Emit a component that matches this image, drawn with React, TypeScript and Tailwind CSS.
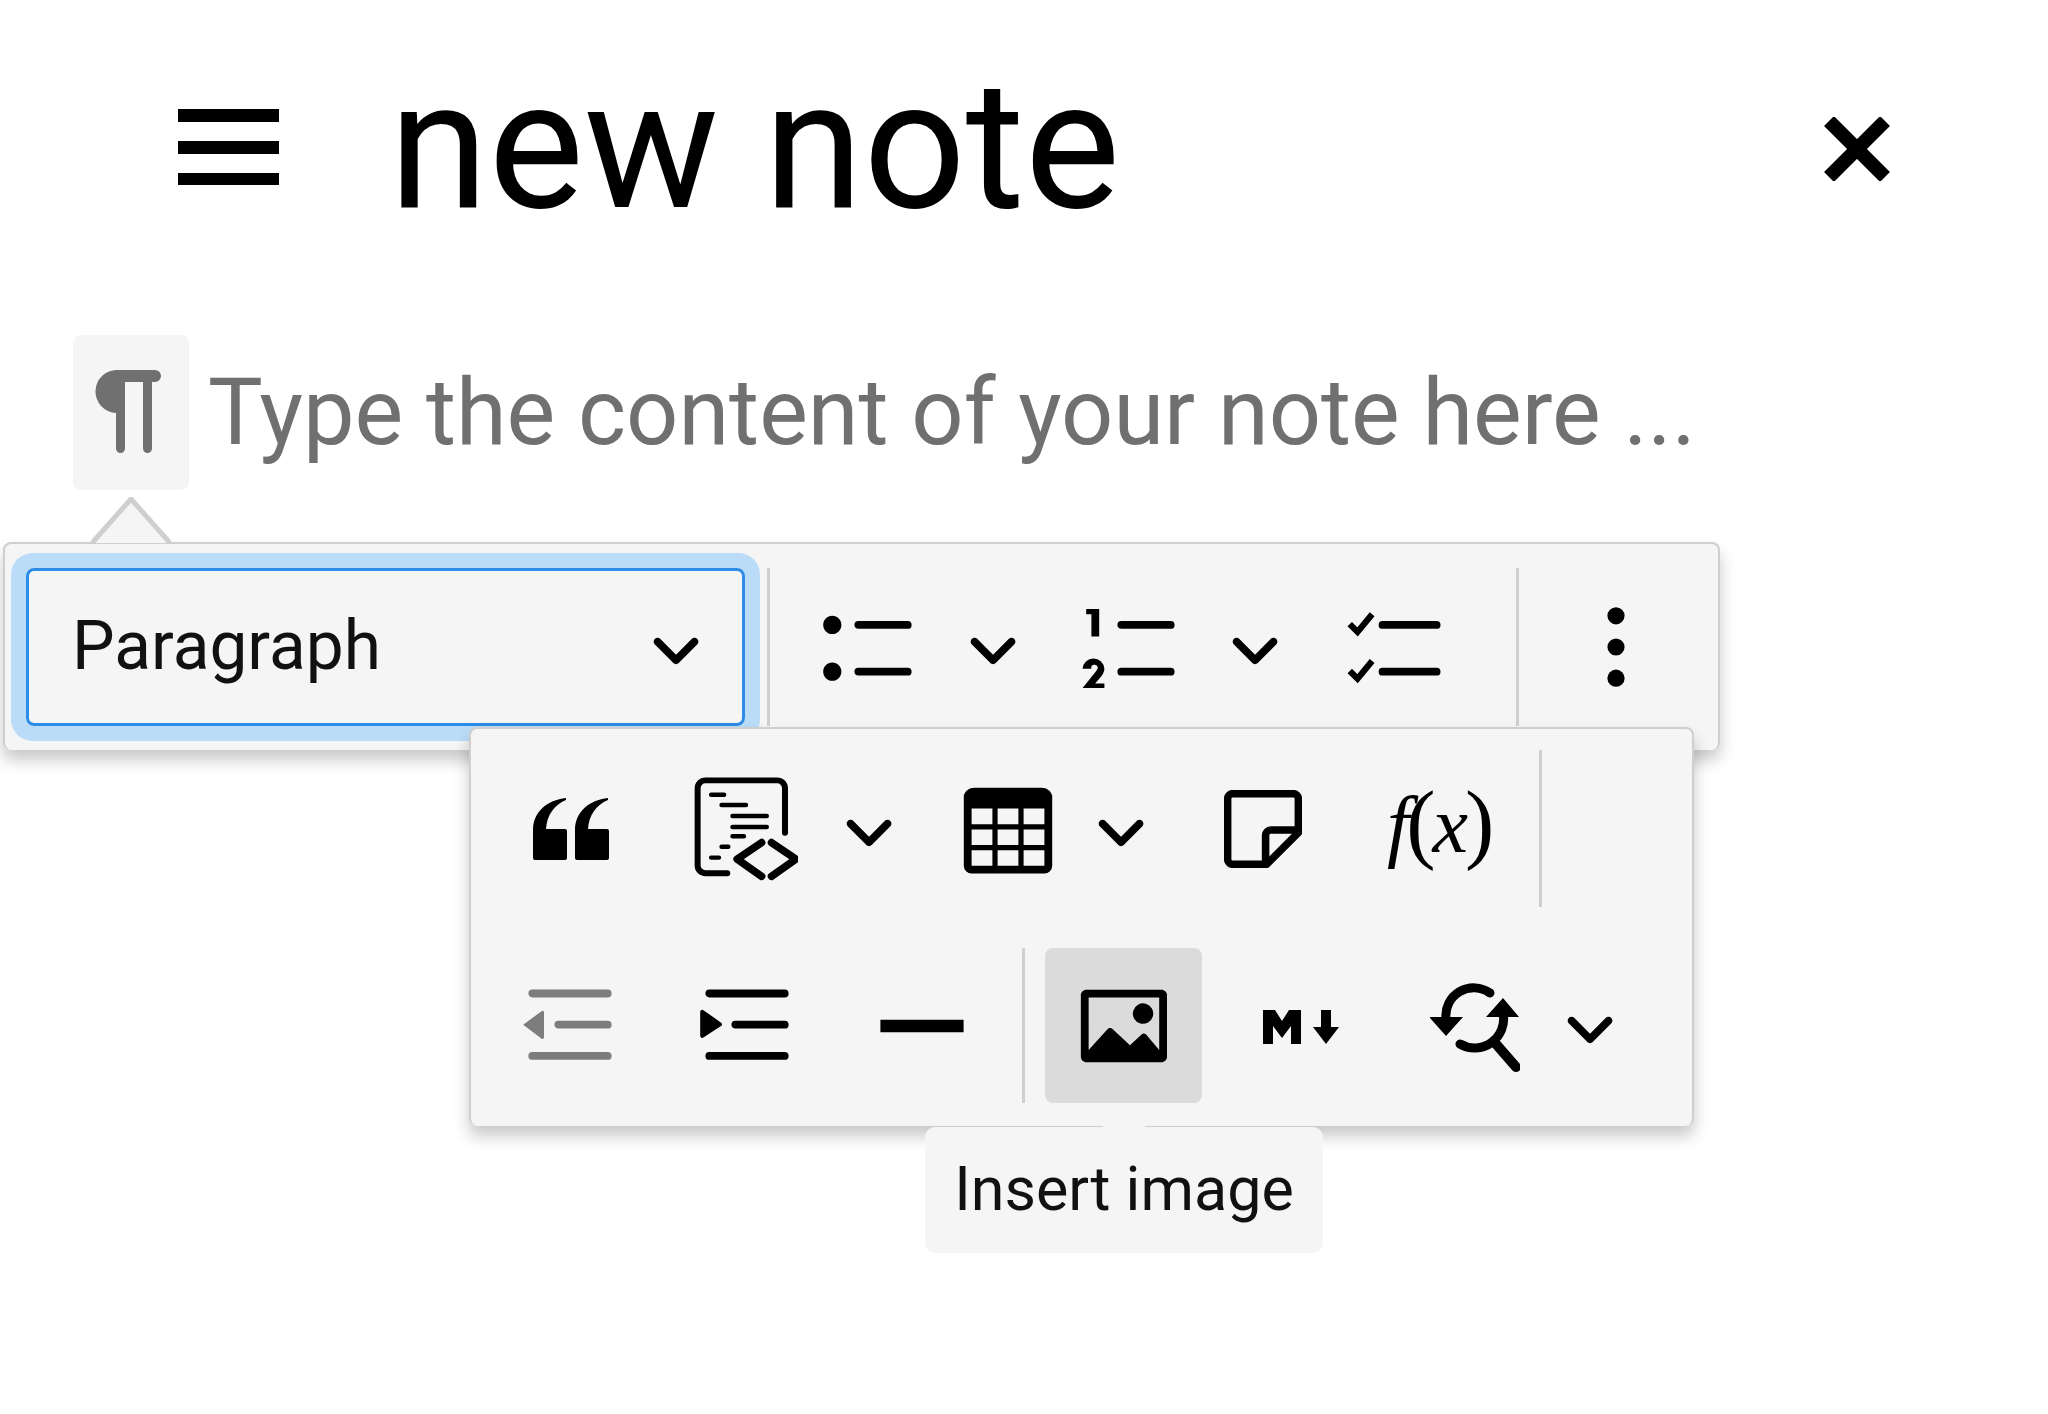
import React from 'react';

const Chevron = ({ className = '' }: { className?: string }) => (
  <svg viewBox="0 0 10 10" className={`w-[52px] h-[52px] shrink-0 ${className}`} fill="#000">
    <path d="M.941 4.523a.75.75 0 1 1 1.06-1.06l3.006 3.005 3.005-3.005a.75.75 0 1 1 1.06 1.06l-3.549 3.55a.75.75 0 0 1-1.168-.136L.941 4.523z" />
  </svg>
);

const Icon = ({ d, className = '', fill = '#000' }: { d: string; className?: string; fill?: string }) => (
  <svg viewBox="0 0 20 20" className={`w-[104px] h-[104px] shrink-0 ${className}`} fill={fill} fillRule="evenodd">
    <path d={d} />
  </svg>
);

const Sep = ({ className = '' }: { className?: string }) => <div className={`w-[3px] bg-[#cfcfcf] shrink-0 ${className}`} />;

const icons = {
  bullets: 'M7 5.75c0 .414.336.75.75.75h9.5a.75.75 0 1 0 0-1.5h-9.5a.75.75 0 0 0-.75.75zm-6 0C1 4.784 1.777 4 2.75 4c.966 0 1.75.777 1.75 1.75 0 .966-.777 1.75-1.75 1.75C1.784 7.5 1 6.723 1 5.75zm6 9c0 .414.336.75.75.75h9.5a.75.75 0 1 0 0-1.5h-9.5a.75.75 0 0 0-.75.75zm-6 0c0-.966.777-1.75 1.75-1.75.966 0 1.75.777 1.75 1.75 0 .966-.777 1.75-1.75 1.75-.966 0-1.75-.777-1.75-1.75z',
  numbers: 'M7 5.75c0 .414.336.75.75.75h9.5a.75.75 0 1 0 0-1.5h-9.5a.75.75 0 0 0-.75.75zM3.5 3v5H2V3.7H1v-1h2.5V3zM.343 17.857l2.59-3.257c.2-.3.3-.5.3-.7a.6.6 0 1 0-1.24.3H.302a2.1 2.1 0 0 1 4.196 0c0 .505-.245 1.007-.579 1.41l-1.19 1.4h1.767v.857H.343zM7 14.75a.75.75 0 0 1 .75-.75h9.5a.75.75 0 1 1 0 1.5h-9.5a.75.75 0 0 1-.75-.75z',
  table: 'M3 5.5v3h4v-3H3zm0 4v3h4v-3H3zm0 4v3h4v-3H3zm5 3h4v-3H8v3zm5 0h4v-3h-4v3zm4-4v-3h-4v3h4zm0-4v-3h-4v3h4zm1.5 8A1.5 1.5 0 0 1 17 18H3a1.5 1.5 0 0 1-1.5-1.5V3c.222-.863 1.068-1.5 2-1.5h13c.932 0 1.778.637 2 1.5v13.5zM12 12.5v-3H8v3h4zm0-4v-3H8v3h4z',
  outdent: 'M2 3.75c0 .414.336.75.75.75h14.5a.75.75 0 1 0 0-1.5H2.75a.75.75 0 0 0-.75.75zm5 6c0 .414.336.75.75.75h9.5a.75.75 0 1 0 0-1.5h-9.5a.75.75 0 0 0-.75.75zM2.75 16.5h14.5a.75.75 0 1 0 0-1.5H2.75a.75.75 0 1 0 0 1.5zM1 9.74 4.6 7.1a.3.3 0 0 1 .4.25v4.85a.3.3 0 0 1-.45.25L1 9.74z',
  indent: 'M2 3.75c0 .414.336.75.75.75h14.5a.75.75 0 1 0 0-1.5H2.75a.75.75 0 0 0-.75.75zm5 6c0 .414.336.75.75.75h9.5a.75.75 0 1 0 0-1.5h-9.5a.75.75 0 0 0-.75.75zM2.75 16.5h14.5a.75.75 0 1 0 0-1.5H2.75a.75.75 0 1 0 0 1.5zM1.632 6.95 5.02 9.358a.4.4 0 0 1-.013.661l-3.39 2.207A.4.4 0 0 1 1 11.892V7.275a.4.4 0 0 1 .632-.326z',
  image: 'M6.91 10.54c.26-.23.64-.21.88.03l3.36 3.14 2.23-2.06a.64.64 0 0 1 .87 0l2.52 2.97V4.5H3.2v10.12l3.71-4.08zm10.27-7.51c.6 0 1.09.47 1.09 1.05v11.84c0 .59-.49 1.06-1.09 1.06H2.79c-.6 0-1.09-.47-1.09-1.06V4.08c0-.58.49-1.05 1.1-1.05h14.38zm-5.22 5.56a1.96 1.96 0 1 1 3.4-1.96 1.96 1.96 0 0 1-3.4 1.96z',
};

const PilcrowIcon = () => (
  <svg viewBox="0 0 66 83" className="w-[66px] h-[83px] shrink-0" fill="#707070">
    <path d="M23 0H60a6 6 0 0 1 0 12H57V78.500a4.500 4.500 0 0 1-9 0V12H30V78.500a4.500 4.500 0 0 1-9 0V43A21.500 21.500 0 0 1 23 0z" />
  </svg>
);

const QuoteIcon = () => (
  <svg viewBox="0 0 77 63" className="w-[77px] h-[63px] shrink-0" fill="#000">
    <path d="M0 61V33C0 15 14 3 33 1V3C21 8 14 18 13 32H32a2 2 0 0 1 2 2V61a2 2 0 0 1-2 2H2a2 2 0 0 1-2-2z" />
    <path d="M42 61V33C42 15 56 3 75 1V3C63 8 56 18 55 32H74a2 2 0 0 1 2 2V61a2 2 0 0 1-2 2H44a2 2 0 0 1-2-2z" />
  </svg>
);

const TodoIcon = () => (
  <svg viewBox="0 0 20 20" className="w-[104px] h-[104px] shrink-0" fill="none" stroke="#000">
    <path d="M7.6 5.75H18M7.6 14.75H18" strokeWidth="1.5" strokeLinecap="round" />
    <path d="M1.300 5.600 2.800 7.100 5.600 3.700M1.300 14.600 2.800 16.100 5.600 12.700" strokeWidth="1.200" />
  </svg>
);

const CodeIcon = () => (
  <svg viewBox="0 0 20 20" className="w-[104px] h-[104px] shrink-0" fill="none" stroke="#000" strokeLinecap="round">
    <path d="M6.400 18.500H2.200a1.500 1.500 0 0 1-1.500-1.500V2.150a1.500 1.500 0 0 1 1.500-1.500H16a1.500 1.500 0 0 1 1.500 1.500V10.700" strokeWidth="1.150" />
    <path d="M3.300 3.400H5.800M5.300 5.400H10M7.400 7.500H14M7.400 9.600H14M7.400 11.400H9.600M5.300 13.400H6.600M3.300 15.500H4.800" strokeWidth=".85" />
    <path d="M13 12.600 8.300 15.800 13 19.100M14.900 12.600 19.600 15.800 14.900 19.100" strokeWidth="1.450" strokeLinejoin="round" />
  </svg>
);

const NoteIcon = () => (
  <svg viewBox="0 0 15 15" className="w-[78px] h-[78px] shrink-0" fill="none" stroke="#000" strokeWidth="1.450" strokeLinejoin="round">
    <path d="M1.700.700H13.300a1 1 0 0 1 1 1V8.200L8.200 14.300H1.700a1 1 0 0 1-1-1V1.700a1 1 0 0 1 1-1z" />
    <path d="M8 14V8.700a1 1 0 0 1 1-1H14.200" />
  </svg>
);

const MarkdownIcon = () => (
  <svg viewBox="0 0 76 34" className="w-[76px] h-[34px] shrink-0" fill="#000">
    <path d="M0 0h12l7 11 7-11h12v34H28V16l-9 12-9-12v18H0z" />
    <path d="M58 0h10v17h8L63 34 50 17h8z" />
  </svg>
);

const FindReplaceIcon = () => (
  <svg viewBox="0 0 90 90" className="w-[90px] h-[90px] shrink-0" fill="none" stroke="#000" strokeWidth="9" strokeLinecap="round">
    <path d="M60 10A28 28 0 0 0 16 36" />
    <path d="M30 61A29 29 0 0 0 73 30" />
    <path d="M66 61 86 84" strokeWidth="10" />
    <path d="M-1 34h34L16 53zM56 34h33L73 15z" fill="#000" stroke="none" />
  </svg>
);

const DotsIcon = () => (
  <svg viewBox="0 0 20 20" className="w-[104px] h-[104px] shrink-0" fill="#000">
    <circle cx="10" cy="4" r="1.650" />
    <circle cx="10" cy="10" r="1.650" />
    <circle cx="10" cy="16" r="1.650" />
  </svg>
);

export default function App() {
  return (
    <div className="relative w-[2048px] h-[1414px] bg-white overflow-hidden font-['Roboto',sans-serif] text-black">
      <header className="flex items-center h-[250px] pt-[50px] pl-[178px]">
        <svg viewBox="0 0 101 76" className="w-[101px] h-[76px] shrink-0 mb-[6px]" fill="#000">
          <rect y="0" width="101" height="13" />
          <rect y="32" width="101" height="13" />
          <rect y="64" width="101" height="12" />
        </svg>
        <h1 className="ml-[110px] mb-[8px] text-[180px] leading-none font-normal whitespace-nowrap">new note</h1>
        <svg viewBox="0 0 66 64" className="w-[66px] h-[64px] ml-auto mr-[158px] mb-[2px] shrink-0" fill="none" stroke="#000" strokeWidth="14">
          <path d="M5 4 61 60M61 4 5 60" />
        </svg>
      </header>

      <div className="flex items-center mt-[85px] ml-[73px]">
        <div className="flex items-center justify-center w-[116px] h-[155px] pr-[6px] pb-[2px] rounded-[8px] bg-[#f5f5f5] shrink-0">
          <PilcrowIcon />
        </div>
        <p className="ml-[19px] text-[91.8px] leading-none text-[#707070] whitespace-nowrap">Type the content of your note here ...</p>
      </div>

      {/* balloon arrow */}
      <svg viewBox="0 0 80 46" className="absolute left-[91px] top-[497px] w-[80px] h-[46px] z-10" fill="#f5f5f5" stroke="#cfcfcf" strokeWidth="5">
        <path d="M1 46 40 2 79 46" />
      </svg>

      {/* main toolbar */}
      <div className="absolute left-[3px] top-[542px] w-[1717px] h-[208px] flex items-center rounded-[8px] border-2 border-[#cfcfcf] border-b-0 bg-[#f5f5f5] shadow-[0_10px_16px_rgba(0,0,0,0.22)]">
        <div className="flex items-center justify-between w-[719px] h-[158px] ml-[21px] pl-[43px] pr-[40px] rounded-[8px] border-[3px] border-[#2d8ce6] shadow-[0_0_0_15px_#bbdcf8] shrink-0">
          <span className="text-[67.6px] leading-none text-[#111]">Paragraph</span>
          <Chevron />
        </div>
        <Sep className="h-[158px] ml-[22px]" />
        <Icon d={icons.bullets} className="ml-[48px]" />
        <Chevron className="ml-[45px]" />
        <Icon d={icons.numbers} className="ml-[62px]" />
        <Chevron className="ml-[44px]" />
        <div className="ml-[62px]"><TodoIcon /></div>
        <Sep className="h-[158px] ml-[69px]" />
        <div className="ml-[45px]"><DotsIcon /></div>
      </div>

      {/* overflow panel */}
      <div className="absolute left-[469px] top-[727px] w-[1225px] h-[399px] pt-[21px] rounded-[8px] border-2 border-[#cfcfcf] border-b-0 bg-[#f5f5f5] shadow-[0_10px_16px_rgba(0,0,0,0.22)] z-20">
        <div className="flex items-center h-[157px]">
          <div className="ml-[62px] mr-[11px]"><QuoteIcon /></div>
          <div className="ml-[73px]"><CodeIcon /></div>
          <Chevron className="ml-[45px]" />
          <Icon d={icons.table} className="ml-[61px] mt-[6px]" />
          <Chevron className="ml-[35px]" />
          <div className="ml-[77px]"><NoteIcon /></div>
          <span className="ml-[85px] w-[105px] whitespace-nowrap font-['Liberation_Serif',serif] text-[80px] leading-none tracking-[-3px] mt-[-12px]">
            <i>f</i><span className="text-[88px]">(</span><i>x</i><span className="text-[88px]">)</span>
          </span>
          <Sep className="h-[157px] ml-[47px]" />
        </div>
        <div className="flex items-center h-[155px] mt-[41px]">
          <Icon d={icons.outdent} fill="#7d7d7d" className="ml-[47px]" />
          <Icon d={icons.indent} className="ml-[73px]" />
          <Icon d="M2 8.800h16v2.400H2z" className="ml-[71px]" />
          <Sep className="h-[155px] ml-[48px]" />
          <div className="relative flex items-center justify-center w-[157px] h-[155px] ml-[20px] rounded-[8px] bg-[#dbdbdb] shrink-0">
            <Icon d={icons.image} />
            <div className="absolute left-[-120px] top-[179px] flex items-center justify-center w-[398px] h-[126px] pb-[2px] rounded-[10px] bg-[#f5f5f5] text-[61px] leading-none text-[#111] whitespace-nowrap z-30">
              <span className="absolute top-[-12px] left-[177px] w-0 h-0 border-x-[22px] border-x-transparent border-b-[12px] border-b-[#f5f5f5]" />
              Insert image
            </div>
          </div>
          <div className="ml-[61px] mt-[2px]"><MarkdownIcon /></div>
          <div className="ml-[91px] mt-[4px]"><FindReplaceIcon /></div>
          <Chevron className="ml-[44px]" />
        </div>
      </div>
    </div>
  );
}
